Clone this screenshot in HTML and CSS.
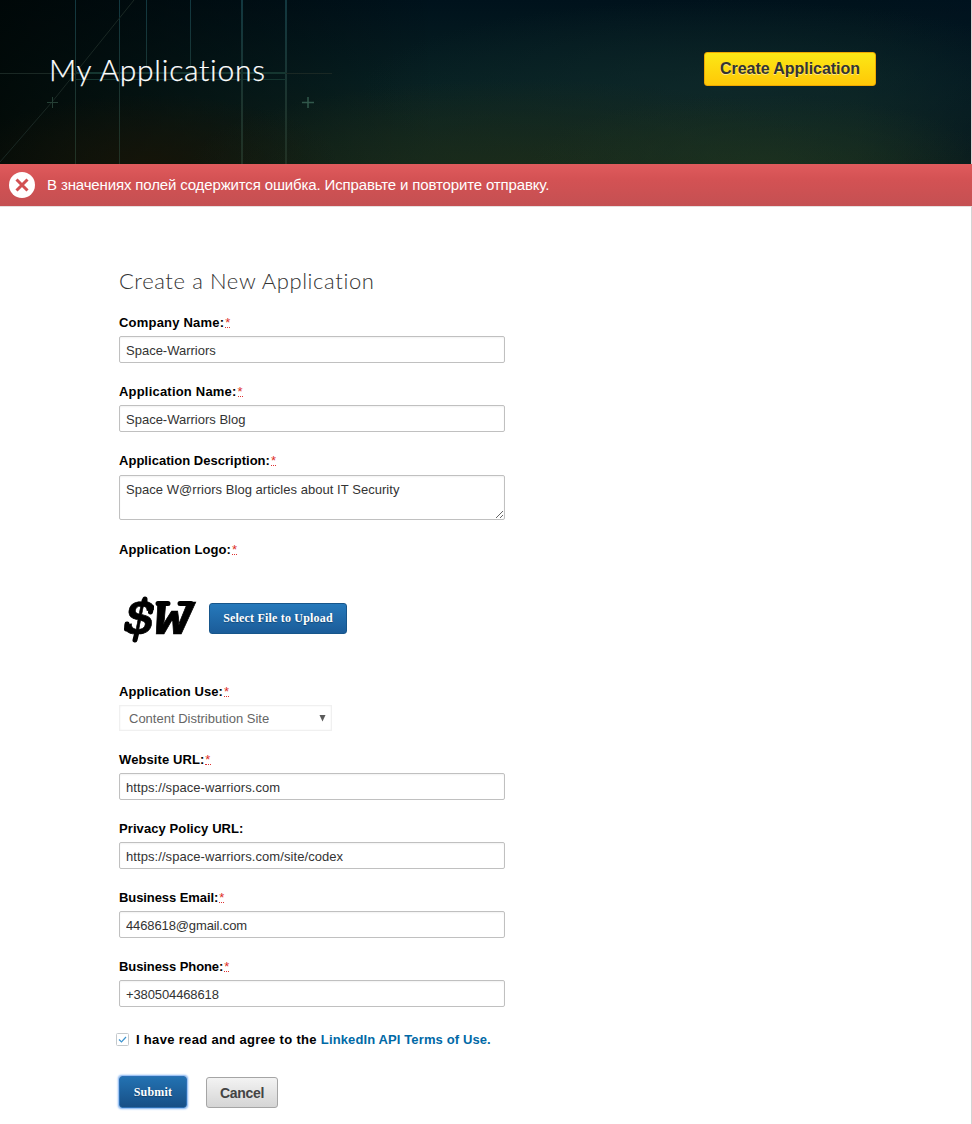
FILE: index.html
```html
<!DOCTYPE html>
<html lang="en">
<head>
<meta charset="utf-8">
<title>My Applications</title>
<link rel="stylesheet" href="styles.css">
</head>
<body>
<header class="hero">
  <svg class="hero-art" width="971" height="164" viewBox="0 0 971 164" aria-hidden="true">
    <defs>
      <linearGradient id="beam" gradientUnits="userSpaceOnUse" x1="0" y1="0" x2="0" y2="164">
        <stop offset="0" stop-color="#123840"/><stop offset="1" stop-color="#223224"/>
      </linearGradient>
    </defs>
    <g fill="url(#beam)">
      <rect x="75" width="1" height="164"/><rect x="119" width="1" height="164"/>
      <rect x="146" width="1" height="66"/><rect x="190" width="1" height="66"/>
      <rect x="241" width="2" height="164"/><rect x="285" width="2" height="164"/>
    </g>
    <g fill="#153630">
      <rect x="75" y="72" width="211" height="2"/><rect x="75" y="79" width="211" height="1"/>
    </g>
    <path d="M0 73.500H75M286 73.500H332M0 162L52 102L134 0" fill="none" stroke="#1a2824"/>
    <path d="M47 102.500H58M52.500 97V108" fill="none" stroke="#253f35"/>
    <path d="M302 102.500H314M308 97V108" fill="none" stroke="#31584b" stroke-width="1.500"/>
  </svg>
  <h1 class="hero-title">My Applications</h1>
  <button class="btn btn-create">Create Application</button>
</header>
<div class="alert">
  <svg class="alert-icon" width="26" height="26" viewBox="0 0 26 26" aria-hidden="true">
    <circle cx="13" cy="13" r="13" fill="#fff"/>
    <path d="M7.500 7.500L18.500 18.500M18.500 7.500L7.500 18.500" stroke="#d25052" stroke-width="3"/>
  </svg>
  <span class="alert-text">В значениях полей содержится ошибка. Исправьте и повторите отправку.</span>
</div>
<main class="content">
  <h2 class="form-title">Create a New Application</h2>
  <form class="form">
    <div class="field"><label class="label">Company Name:<span class="req">*</span></label><input class="input" value="Space-Warriors"></div>
    <div class="field"><label class="label">Application Name:<span class="req">*</span></label><input class="input" value="Space-Warriors Blog"></div>
    <div class="field field-area"><label class="label label-tight">Application Description:<span class="req">*</span></label><textarea class="input area">Space W@rriors Blog articles about IT Security</textarea></div>
    <div class="field field-logo"><label class="label label-mid">Application Logo:<span class="req">*</span></label>
      <div class="logo-row">
        <svg class="logo" width="90" height="80" viewBox="0 0 90 80">
          <text class="logo-text" x="5" y="56" textLength="30" lengthAdjust="spacingAndGlyphs">$</text>
          <text class="logo-text" x="34" y="56" textLength="38" lengthAdjust="spacingAndGlyphs">W</text>
          <path d="M39 25.500H49M61 25.500H72M32.500 29L31.500 34M8 46L7.500 51M26 21V24M17.500 56L16 62" fill="none" stroke="#000" stroke-width="5" stroke-linecap="round"/>
        </svg>
        <button type="button" class="btn btn-blue btn-upload">Select File to Upload</button>
      </div>
    </div>
    <div class="field"><label class="label label-mid">Application Use:<span class="req">*</span></label><div class="select"><span>Content Distribution Site</span><svg width="7" height="7" viewBox="0 0 7 7"><path d="M0.500 0H6.500L3.500 6.500Z" fill="#5b5b5b"/></svg></div></div>
    <div class="field"><label class="label label-mid">Website URL:<span class="req">*</span></label><input class="input input-url" value="https://space-warriors.com"></div>
    <div class="field"><label class="label label-mid">Privacy Policy URL:</label><input class="input input-url" value="https://space-warriors.com/site/codex"></div>
    <div class="field"><label class="label label-narrow">Business Email:<span class="req">*</span></label><input class="input input-tight" value="4468618@gmail.com"></div>
    <div class="field"><label class="label label-narrow">Business Phone:<span class="req">*</span></label><input class="input input-tight" value="+380504468618"></div>
    <div class="terms">
      <svg width="13" height="13" viewBox="0 0 13 13"><rect x=".5" y=".5" width="12" height="12" rx="1" fill="#fff" stroke="#c4c9cc"/><path d="M3 6.500L5.500 9L10 4" fill="none" stroke="#3d94cf" stroke-width="1.200"/></svg>
      <span class="terms-text">I have read and agree to the <a class="link" href="#">LinkedIn API Terms of Use.</a></span>
    </div>
    <div class="actions">
      <button type="button" class="btn btn-blue btn-submit">Submit</button>
      <button type="button" class="btn btn-cancel">Cancel</button>
    </div>
  </form>
</main>
</body>
</html>
```
FILE: styles.css
```css
* { box-sizing: border-box; }
body {
  margin: 0;
  height: 1124px;
  overflow: hidden;
  background: linear-gradient(#d4d4d4, #d4d4d4) right top / 1px 100% no-repeat #fff;
  font-family: "Liberation Sans", Arial, sans-serif;
  font-size: 13px;
}
.hero {
  position: relative;
  display: flex;
  align-items: flex-start;
  justify-content: space-between;
  width: 971px;
  height: 164px;
  padding: 52px 95px 0 49px;
  background:
    radial-gradient(ellipse 230px 70px at 760px 164px, rgba(30, 52, 32, .7), transparent),
    radial-gradient(ellipse 330px 85px at 520px 164px, rgba(29, 45, 26, .7), transparent),
    radial-gradient(ellipse 360px 90px at 720px 90px, rgba(16, 42, 43, .7), transparent),
    radial-gradient(ellipse 190px 70px at 150px 164px, rgba(22, 20, 8, .9), transparent),
    linear-gradient(90deg, rgba(0, 5, 3, .8), transparent 45%, transparent 88%, rgba(0, 18, 32, .5)),
    linear-gradient(#00121c, #072022 50%, #14271d);
}
.hero-art { position: absolute; left: 0; top: 0; }
.hero-title {
  position: relative;
  margin: -1px 0 0;
  font: 300 30px/36px Lato, sans-serif;
  letter-spacing: .73px;
  color: #fff;
  -webkit-text-stroke: .25px #fff;
  white-space: nowrap;
}
.btn {
  display: flex;
  align-items: center;
  justify-content: center;
  padding: 0;
  border: 1px solid;
  border-radius: 3px;
  white-space: nowrap;
}
.btn-create {
  position: relative;
  width: 172px;
  height: 34px;
  border-color: #f0a800;
  background: linear-gradient(#fbe816, #ffc807);
  color: #333;
  font: bold 16px "Liberation Sans", Arial, sans-serif;
  letter-spacing: -.05px;
  text-shadow: 0 1px 0 rgba(255, 255, 255, .5);
}
.alert {
  display: flex;
  align-items: center;
  gap: 12px;
  height: 43px;
  padding: 0 9px 1px;
  border-bottom: 1px solid #e6dfdf;
  background: linear-gradient(#e05b5d, #d45254 35%, #c45052);
  color: #fff;
}
.alert-text { font-size: 15px; letter-spacing: -.14px; white-space: nowrap; }
.content { padding: 61px 0 0 119px; }
.form-title {
  margin: 0 0 20px;
  font: 300 22px/26px Lato, sans-serif;
  letter-spacing: .61px;
  color: #333;
}
.field { display: flex; flex-direction: column; gap: 6px; width: 386px; margin-bottom: 20px; }
.field-area { gap: 7px; margin-bottom: 21px; }
.label {
  height: 16px;
  font-weight: bold;
  line-height: 17px;
  letter-spacing: .2px;
  color: #000;
  white-space: nowrap;
}
.label-mid { letter-spacing: .09px; }
.label-tight { letter-spacing: .03px; }
.label-narrow { letter-spacing: -.08px; }
.req {
  margin-left: 1px;
  border-bottom: 1px dotted #d33;
  color: #dd2e1f;
  font-weight: normal;
  display: inline-block;
  height: 14px;
  line-height: 17px;
}
.input {
  display: block;
  width: 386px;
  height: 27px;
  margin: 0;
  padding: 2px 6px 0;
  border: 1px solid #c0c0c0;
  border-radius: 2px;
  background: #fff;
  box-shadow: inset 0 1px 2px #f2f2f2;
  color: #333;
  font: 13px "Liberation Sans", Arial, sans-serif;
}
.input-url { letter-spacing: .07px; }
.input-tight { letter-spacing: -.12px; }
.area { height: 45px; padding: 6px; letter-spacing: .04px; overflow: hidden; resize: both; }
.field-logo { height: 122px; gap: 21px; }
.logo-row { display: flex; align-items: center; height: 80px; }
.logo { flex: none; }
.logo-text { font: italic bold 49px "Liberation Mono", monospace; fill: #000; stroke: #000; stroke-width: .6px; }
.btn-blue {
  border-color: #17568b;
  background: linear-gradient(#2679bb, #1b5c99);
  color: #fff;
  font: bold 12px "Liberation Serif", "Times New Roman", serif;
  text-shadow: 0 1px 1px rgba(0, 0, 0, .3);
}
.btn-upload { width: 138px; height: 31px; letter-spacing: .19px; padding-top: 1px; }
.select {
  display: flex;
  align-items: center;
  justify-content: space-between;
  width: 213px;
  height: 26px;
  padding: 0 5px 0 9px;
  border: 1px solid #f0f0f0;
  box-shadow: inset 0 0 2px #eee;
  color: #666;
}
.terms { display: flex; align-items: center; gap: 7px; height: 20px; margin: 22px 0 27px -3px; }
.terms-text { font-weight: bold; color: #000; white-space: nowrap; letter-spacing: .32px; }
.link { color: #0069a6; text-decoration: none; letter-spacing: .12px; }
.actions { display: flex; gap: 19px; }
.btn-submit { width: 68px; height: 32px; border-color: #2d70b4; background: linear-gradient(#2372b2, #174f86); box-shadow: 0 0 2px 1px #7aaef0; letter-spacing: .2px; padding-top: 1px; }
.btn-cancel {
  width: 72px;
  height: 31px;
  margin-top: 1px;
  border-color: #a5a5a5;
  background: linear-gradient(#f3f3f3, #d5d5d5);
  color: #444;
  font: bold 14px "Liberation Sans", Arial, sans-serif;
  letter-spacing: -.3px;
}
```
